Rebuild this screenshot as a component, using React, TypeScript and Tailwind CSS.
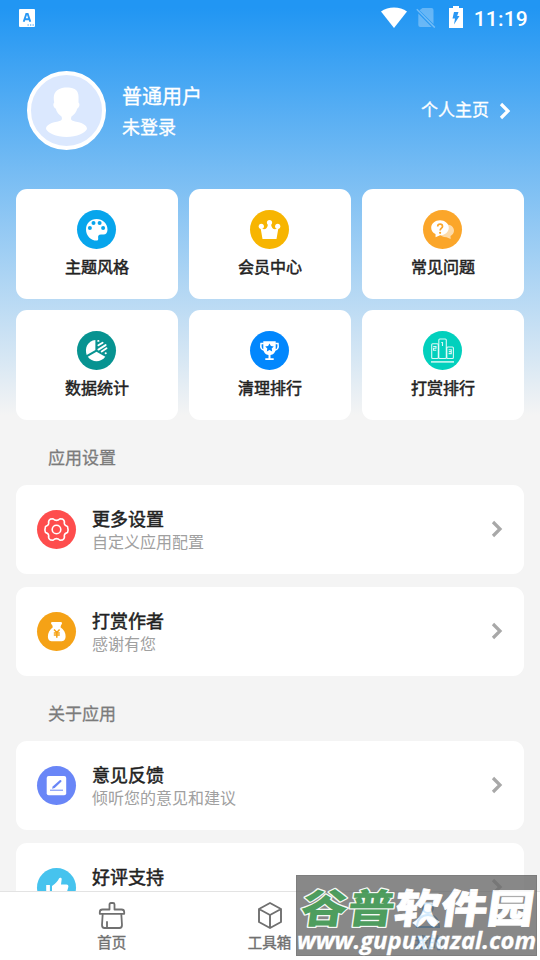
import React from 'react';
import { clsx } from 'clsx';

interface IconItem {
  title: string;
  color: string;
  icon: React.ReactNode;
}

interface SettingItem extends IconItem {
  subtitle?: string;
}

const PaletteIcon = () => (
  <svg viewBox="0 0 39 39" className="w-full h-full">
    <path
      fill="#fff"
      d="M19.6 9C13.5 9 9 13.6 9 19.5C9 26 14 30.6 19.5 30.6C20.8 30.6 21.4 29.8 21.2 28.5C20.8 25.8 21.5 24.5 24 24.5H26.5C29 24.5 30.5 22.5 30.5 19.5C30.5 13.5 25.5 9 19.6 9Z"
    />
    <g fill="#07a5ec">
      <circle cx="16.5" cy="13" r="2" />
      <circle cx="22.6" cy="13" r="2" />
      <circle cx="12.9" cy="17.9" r="2" />
      <circle cx="26.1" cy="17.9" r="2" />
    </g>
  </svg>
);

const CrownIcon = () => (
  <svg viewBox="0 0 39 39" className="w-full h-full">
    <g fill="#fff">
      <circle cx="11.3" cy="16.3" r="2.6" />
      <circle cx="19.5" cy="12.6" r="2.6" />
      <circle cx="27.7" cy="16.3" r="2.6" />
      <path d="M10.5 17.5C13 20.3 17.6 20 18 14H21C21.4 20 26 20.3 28.5 17.5L26.5 29H12.5Z" />
    </g>
  </svg>
);

const QuestionIcon = () => (
  <svg viewBox="0 0 39 39" className="w-full h-full">
    <path
      fill="#fff"
      fillOpacity="0.6"
      d="M24 14.5C28 14.5 31 17.3 31 20.8C31 23 29.6 24.7 27.5 26L27.7 29L23.5 27.3C20 27.3 17.5 25.7 16.8 23.5Z"
    />
    <path
      fill="#fff"
      d="M17 10.2C21.8 10.2 25.8 13.4 25.8 17.7S21.8 25.3 17 25.3L12.6 27.2L12.5 24.1C9.8 22.9 8.2 20.6 8.2 17.8C8.2 13.5 12.2 10.2 17 10.2Z"
    />
    <path d="M14.7 16.4C14.7 13.4 19.5 13.4 19.5 16.4C19.5 18.2 17.1 18.2 17.1 20.6" fill="none" stroke="#fba62a" strokeWidth="1.7" />
    <circle cx="17.1" cy="22.8" r="1.1" fill="#fba62a" />
  </svg>
);

const PieIcon = () => (
  <svg viewBox="0 0 39 39" className="w-full h-full">
    <path fill="#fff" d="M18.4 9V19L9.7 24C7.3 17.5 10.5 9.8 18.4 9Z" />
    <path fill="#fff" d="M19.5 20.8L28.3 25.8C24 31.7 15 31.7 10.8 25.8Z" />
    <path
      fill="none"
      stroke="#fff"
      strokeWidth="1.9"
      strokeLinecap="round"
      d="M21.2 9.9h.3M21.4 14.3l4.2-2.5M21.4 18.6l7.2-4.5M24.7 20.5l4.8-3.2M28.6 22.3h.2"
    />
  </svg>
);

const TrophyIcon = () => (
  <svg viewBox="0 0 39 39" className="w-full h-full">
    <path fill="#fff" d="M13.3 10.3H25.7V18C25.7 21.3 23 23.8 20.5 24V27.3H23.7V28.9H15.3V27.3H18.5V24C16 23.8 13.3 21.3 13.3 18Z" />
    <path fill="none" stroke="#fff" strokeWidth="1.5" d="M13.8 12.5H11Q10 18.9 14 18.9M25.2 12.5H28Q29 18.9 25 18.9" />
    <path fill="#0287fd" d="M19.5 12.4l1.4 2.7 2.9.4-2.1 2.1.5 2.9-2.7-1.4-2.7 1.4.5-2.9-2.1-2.1 2.9-.4Z" />
  </svg>
);

const PodiumIcon = () => (
  <svg viewBox="0 0 39 39" className="w-full h-full">
    <g fill="none" stroke="#fff" strokeOpacity="0.85" strokeWidth="1.1">
      <rect x="8.7" y="12.7" width="6.6" height="14.8" rx="1" />
      <rect x="15.8" y="8" width="7.5" height="19.5" rx="1" />
      <rect x="23.8" y="16" width="6.6" height="11.5" rx="1" />
      <path d="M18.3 11.5h1.2V15M10.2 15.5H13V17.3H10.5V19.2H13.3M25.6 18.7H28.3V22.6H25.6M25.8 20.6H28.3" />
      <path d="M8 30.9H31" strokeWidth="1.5" />
    </g>
  </svg>
);

const GearIcon = () => (
  <svg viewBox="0 0 39 39" className="w-full h-full">
    <g fill="none" stroke="#fff" strokeWidth="1.6" strokeLinejoin="round">
      <path d="M13.3 9.1L16 8.7Q19.5 12.2 23 8.7L25.7 9.1Q28 10.5 27.3 13.5Q27.6 15.6 30.5 16.4Q31.6 19.5 30.5 22.6Q27.6 23.4 27.3 25.5Q28 28.5 25.7 29.9L23 30.3Q19.5 26.8 16 30.3L13.3 29.9Q11 28.5 11.7 25.5Q11.4 23.4 8.5 22.6Q7.4 19.5 8.5 16.4Q11.4 15.6 11.7 13.5Q11 10.5 13.3 9.1Z" />
      <circle cx="19.5" cy="19.5" r="4.3" />
    </g>
  </svg>
);

const MoneyBagIcon = () => (
  <svg viewBox="0 0 39 39" className="w-full h-full">
    <path
      fill="#fff"
      d="M15.5 10H23.5C25.5 10 25.5 11.5 24 13.3L23.5 15.2C27 17.5 28.8 21 28.6 24.5C28.4 28 26.8 29.2 23.8 29.2H15.7C12.5 29.2 11 28 10.9 24.5C10.8 21 12.7 17.5 15.8 15.2L15.3 13.3C13.5 11.5 13.5 10 15.5 10Z"
    />
    <path fill="none" stroke="#f5a216" strokeWidth="1.5" d="M17 17.6L19.8 20.5L22.6 17.6M16.8 20.9H22.8M16.8 23H22.8M19.8 20.5V25.7" />
  </svg>
);

const EditIcon = () => (
  <svg viewBox="0 0 39 39" className="w-full h-full">
    <rect x="9.7" y="10.1" width="19.5" height="19.2" rx="2" fill="#fff" />
    <path d="M13 24.2H26" stroke="#6986f7" strokeWidth="1" />
    <path d="M15 22.7L15.7 20.5L22.7 14.2Q24.5 13.8 24.5 15.5L17.6 22Z" fill="#6986f7" />
  </svg>
);

const LikeIcon = () => (
  <svg viewBox="0 0 39 39" className="w-full h-full">
    <path
      fill="#fff"
      d="M9.2 17H12.9V30.5H9.2ZM15 18C19 15.5 21 12.5 22 10.5C22.5 9.3 24.7 9.5 24.7 11L24 16.5H29.5C31.3 16.5 31.7 18 31.2 19.5L28.5 29C28.2 30.2 27.5 30.5 26.5 30.5H15Z"
    />
  </svg>
);

const ChevronIcon = ({ className }: { className: string }) => (
  <svg viewBox="0 0 12 18" className={clsx('w-3 h-[18px]', className)}>
    <path d="M2 2l7 7-7 7" fill="none" stroke="currentColor" strokeWidth="3.2" />
  </svg>
);

const tiles: IconItem[] = [
  { title: '主题风格', color: 'bg-[#07a5ec]', icon: <PaletteIcon /> },
  { title: '会员中心', color: 'bg-[#f7b501]', icon: <CrownIcon /> },
  { title: '常见问题', color: 'bg-[#fba62a]', icon: <QuestionIcon /> },
  { title: '数据统计', color: 'bg-[#079391]', icon: <PieIcon /> },
  { title: '清理排行', color: 'bg-[#0287fd]', icon: <TrophyIcon /> },
  { title: '打赏排行', color: 'bg-[#02d0bd]', icon: <PodiumIcon /> },
];

const appSettings: SettingItem[] = [
  { title: '更多设置', subtitle: '自定义应用配置', color: 'bg-[#fe4d4d]', icon: <GearIcon /> },
  { title: '打赏作者', subtitle: '感谢有您', color: 'bg-[#f5a216]', icon: <MoneyBagIcon /> },
];

const aboutSettings: SettingItem[] = [
  { title: '意见反馈', subtitle: '倾听您的意见和建议', color: 'bg-[#6986f7]', icon: <EditIcon /> },
  { title: '好评支持', color: 'bg-[#46c3ee]', icon: <LikeIcon /> },
];

const StatusBar = () => (
  <div className="flex h-9 items-center justify-between pl-[19px] pr-3 text-white">
    <svg viewBox="0 0 16 18" className="w-4 h-[18px]">
      <rect width="16" height="18" rx="1" fill="#fff" />
      <path d="M4.7 12.7L7.3 5H8.7L11.3 12.7M5.8 10.2H10.2" fill="none" stroke="#2998f4" strokeWidth="1.9" />
      <path d="M8.5 16h1.3M11 16h1.3M13.5 16h1.3" stroke="#2998f4" strokeWidth="1.2" />
    </svg>
    <div className="flex items-center">
      <svg viewBox="0 0 26 21" className="mb-0.5 w-[26px] h-[21px]">
        <path d="M0 4.5C7-1 19-1 26 4.5L13 21Z" fill="#fff" />
      </svg>
      <svg viewBox="0 0 20 20" className="ml-[9px] w-5 h-5">
        <path d="M6.5 0H15.5Q17.5 0 17.5 2V16L3.5 2.3ZM2.3 5.5L15.5 19H4.3Q2.3 19 2.3 17Z" fill="#fff" fillOpacity="0.3" />
        <path d="M.8 1.2L18.8 19.6" stroke="#fff" strokeOpacity="0.35" strokeWidth="1.5" />
      </svg>
      <svg viewBox="0 0 14 22" className="ml-[13px] mb-0.5 w-3.5 h-[22px]">
        <path d="M4 0H10V2H14V22H0V2H4Z" fill="#fff" />
        <path d="M5 6H9.5L8.2 10H10.5L5 18.5L6 12.5H3.5Z" fill="#2998f4" />
      </svg>
      <span className="ml-[11px] pt-0.5 font-[Roboto] text-[21px] font-medium leading-6 tracking-[0.2px]">11:19</span>
    </div>
  </div>
);

const ProfileHeader = () => (
  <div className="flex h-[153px] items-center pb-1 pl-[27px] pr-7 text-white">
    <div className="h-[79px] w-[79px] rounded-full border-4 border-white bg-[#dbe8fe]">
      <svg viewBox="0 0 71 71" className="h-[71px] w-[71px]">
        <path
          fill="#fff"
          d="M31 13C36 12.3 44 12 46.5 17C48 20 47.5 24 47.5 27.5C49.5 29 48 33 46.3 33.5C45.5 37 43 40 40.5 41.5C39.5 44.5 40 45.5 44 46.5C51 47.5 56 50 56 54C54 58 46 62 35.5 62C25 62 17 58 15 54C15 50 20 47.5 27 46.5C31 45.5 31.5 44.5 30.5 41.5C28 40 25.5 37 24.7 33.5C22.7 33 21.5 29 23.2 27.5C22 20 23 15.5 31 13Z"
        />
      </svg>
    </div>
    <div className="ml-4 flex flex-1 flex-col [-webkit-text-stroke:0.3px_currentColor]">
      <span className="text-[20px] leading-[30px]">普通用户</span>
      <span className="text-[18px] leading-[30px]">未登录</span>
    </div>
    <span className="-mt-[3px] text-[17px] leading-6 [-webkit-text-stroke:0.3px_currentColor]">个人主页</span>
    <ChevronIcon className="ml-2.5 mr-px" />
  </div>
);

const Tile = ({ item }: { item: IconItem }) => (
  <div className="flex h-[110px] flex-col items-center rounded-[11px] bg-white pt-[21px]">
    <div className={clsx('mr-px h-[39px] w-[39px] rounded-full', item.color)}>{item.icon}</div>
    <span className="mt-[5px] text-[16px] leading-6 text-[#222] [-webkit-text-stroke:0.5px_currentColor]">{item.title}</span>
  </div>
);

const SettingCard = ({ item }: { item: SettingItem }) => (
  <div className="flex h-[89px] items-center rounded-[11px] bg-white pb-px pl-[21px] pr-[21px]">
    <div className={clsx('mt-px h-[39px] w-[39px] rounded-full', item.color)}>{item.icon}</div>
    <div className="ml-4 flex flex-1 flex-col">
      <span className="text-[18px] leading-6 text-[#222] [-webkit-text-stroke:0.5px_currentColor]">{item.title}</span>
      <span className="h-[22px] text-[16px] leading-[22px] text-[#a0a0a0]">{item.subtitle}</span>
    </div>
    <ChevronIcon className="text-[#a8a8a8]" />
  </div>
);

const SettingSection = ({ title, items }: { title: string; items: SettingItem[] }) => (
  <section>
    <h2 className="flex h-[65px] items-center pl-8 pt-2 text-[17px] text-[#7b7b7b] [-webkit-text-stroke:0.3px_currentColor]">
      {title}
    </h2>
    <div className="flex flex-col gap-[13px]">
      {items.map((item) => (
        <SettingCard key={item.title} item={item} />
      ))}
    </div>
  </section>
);

const BottomNav = () => (
  <nav className="flex h-[69px] shrink-0 border-t border-[#e3e3e3] bg-white px-[33px] text-[14.5px] leading-5 text-[#707070] [-webkit-text-stroke:0.4px_currentColor]">
    <div className="flex flex-1 flex-col items-center pt-[9px]">
      <svg viewBox="0 0 28 28" className="h-7 w-7" fill="none" stroke="#707070" strokeWidth="1.8" strokeLinejoin="round" strokeLinecap="round">
        <path d="M11.5 8.5V3.5Q11.5 2 13 2H15Q16.5 2 16.5 3.5V8.5H23.5Q26.2 8.5 26.2 11V12.8H1.8V11Q1.8 8.5 4.5 8.5ZM4.7 13L4 24Q4 27 6.5 27H21.5Q24 27 24 24L23.3 13M9 21V26.5" />
      </svg>
      <span className="mt-[3px]">首页</span>
    </div>
    <div className="flex flex-1 flex-col items-center pr-px pt-[9px]">
      <svg viewBox="0 0 28 28" className="h-7 w-7" fill="none" stroke="#707070" strokeWidth="1.9" strokeLinejoin="round">
        <path d="M14 2L25 8V21L14 27L3 21V8ZM3 8L14 14L25 8M14 14V27" />
      </svg>
      <span className="mt-[3px]">工具箱</span>
    </div>
    <div className="flex flex-1 flex-col items-center pt-[9px] text-[#2196f3]">
      <svg viewBox="0 0 28 28" className="h-7 w-7" fill="none" stroke="currentColor" strokeWidth="2">
        <circle cx="14" cy="7" r="5" />
        <path d="M3 26C3 18 8 14 14 14S25 18 25 26Z" />
      </svg>
      <span className="mt-[3px]">我的</span>
    </div>
  </nav>
);

const Watermark = () => (
  <div className="absolute left-[296px] top-[875px] h-[81px] w-[241px] bg-[#6b6b6b] opacity-80">
    <svg viewBox="0 0 241 81" className="h-full w-full overflow-visible font-['Noto_Sans_CJK_SC',sans-serif] font-black">
      <rect x="0.5" y="0.5" width="240" height="80" fill="none" stroke="#555" strokeOpacity="0.6" />
      <g transform="translate(9 48) skewX(-8)" fontSize="40" strokeLinejoin="round">
        <text x="-6" y="0" textLength="94" lengthAdjust="spacingAndGlyphs" fill="#238536" stroke="#f4f8f4" strokeWidth="2.5" paintOrder="stroke">谷普</text>
        <text x="88" y="0" textLength="139" lengthAdjust="spacingAndGlyphs" fill="#fff" stroke="#fff" strokeWidth="0.8">软件园</text>
      </g>
      <text x="1" y="74" textLength="239" lengthAdjust="spacingAndGlyphs" fontSize="24" className="font-['Open_Sans'] font-bold italic" fill="#fff" stroke="#fff" strokeWidth="0.3">
        www.gupuxlazal.com
      </text>
    </svg>
  </div>
);

export default function App() {
  return (
    <div className="relative flex h-[960px] w-[540px] flex-col overflow-hidden bg-[#f4f4f4] bg-[linear-gradient(180deg,#2196f3_0px,#2196f3_8px,#f4f4f4_415px)] font-['Noto_Sans_CJK_SC',sans-serif]">
      <StatusBar />
      <ProfileHeader />
      <main className="min-h-0 flex-1 overflow-hidden px-4">
        <div className="grid grid-cols-3 gap-[11px]">
          {tiles.map((item) => (
            <Tile key={item.title} item={item} />
          ))}
        </div>
        <SettingSection title="应用设置" items={appSettings} />
        <SettingSection title="关于应用" items={aboutSettings} />
      </main>
      <BottomNav />
      <Watermark />
    </div>
  );
}
